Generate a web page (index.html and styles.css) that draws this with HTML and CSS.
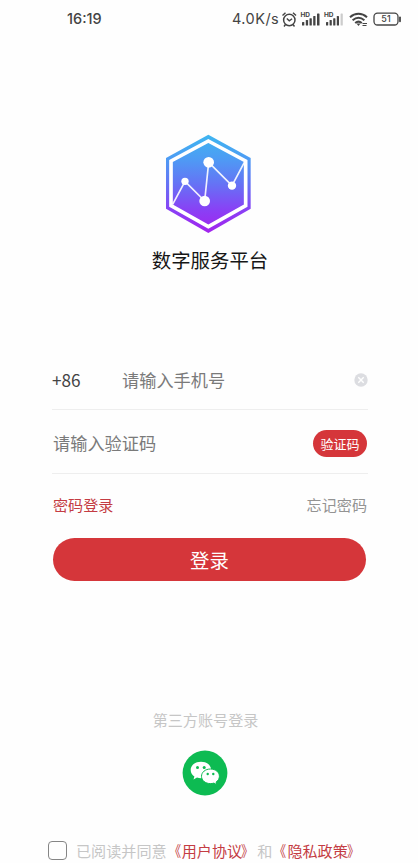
FILE: index.html
```html
<!DOCTYPE html>
<html lang="zh-CN">
<head>
<meta charset="utf-8">
<title>数字服务平台</title>
<link rel="stylesheet" href="styles.css">
</head>
<body>
<div class="screen">
  <header class="status">
    <span class="time">16:19</span>
    <span class="speed">4.0K/s</span>
    <svg class="status-icons" width="124" height="20" viewBox="0 0 124 20" fill="none" stroke="#444">
      <circle cx="10.300" cy="11" r="5.700" stroke-width="1.500"/>
      <path d="M3.500 6.500l3-2.800M17 6.500l-3-2.800M6.500 15.500l-1.500 2M14 15.500l1.500 2" stroke-width="1.400"/>
      <path d="M7.800 9.500l2.500 2.300 2.800-2" stroke-width="1.400"/>
      <g stroke="none" fill="#444">
        <text class="hd" x="21.500" y="7.800">HD</text>
        <rect x="23" y="13" width="2.300" height="3.500" rx=".6"/>
        <rect x="26.800" y="11" width="2.300" height="5.500" rx=".6"/>
        <rect x="30.500" y="9.200" width="2.300" height="7.300" rx=".6"/>
        <rect x="34.200" y="7" width="2.300" height="9.500" rx=".6"/>
        <rect x="38" y="4.500" width="2.500" height="12" rx=".6"/>
      </g>
      <g stroke="none" fill="#444">
        <text class="hd" x="45" y="7.800">HD</text>
        <rect x="47" y="13" width="2.200" height="3.500" rx=".6"/>
        <rect x="50.600" y="11" width="2.200" height="5.500" rx=".6"/>
        <rect x="54.200" y="9.200" width="2.200" height="7.300" rx=".6"/>
        <rect x="57.800" y="7" width="2.200" height="9.500" rx=".6"/>
        <rect x="61.600" y="4.500" width="2.200" height="12" rx=".6" fill="#ccc"/>
      </g>
      <path d="M71 8.200c5-4.500 12-4.500 17 0M73.600 11.200c3.600-3 8.200-3 11.800 0M76.200 14c2-1.700 4.600-1.700 6.600 0" stroke-width="2"/>
      <path d="M77.500 14.500h4l-2 2.500z" fill="#444" stroke="none"/>
      <path d="M83.500 14.500h4.500M83.500 16.500h4" stroke-width="1"/>
      <rect x="95" y="4.200" width="24" height="11.800" rx="3.500" stroke-width="1.300"/>
      <path d="M121 8.300v4" stroke-width="1.800" stroke-linecap="round"/>
      <text class="level" x="107" y="13.400" text-anchor="middle">51</text>
    </svg>
  </header>

  <section class="brand">
    <svg width="86" height="100" viewBox="30 27 258 300">
      <defs>
        <linearGradient id="sky" gradientUnits="userSpaceOnUse" x1="0" y1="29" x2="0" y2="324">
          <stop offset="0" stop-color="#3eb6f0"/>
          <stop offset=".25" stop-color="#4e9bf4"/>
          <stop offset=".5" stop-color="#6573f5"/>
          <stop offset=".78" stop-color="#8b3ef5"/>
          <stop offset="1" stop-color="#a323ed"/>
        </linearGradient>
      </defs>
      <path d="M160 29l127 70v152l-127 73-127-73V99z" fill="url(#sky)"/>
      <path d="M160 48l112 60v134l-112 63-112-63V108z" fill="none" stroke="#fff" stroke-width="11"/>
      <path d="M53 238l37-69 59 59 12-116 70 70 37-70" fill="none" stroke="#fff" stroke-opacity=".9" stroke-width="5"/>
      <g fill="#fff">
        <circle cx="90" cy="169" r="11"/><circle cx="149" cy="228" r="16"/>
        <circle cx="161" cy="112" r="16"/><circle cx="231" cy="182" r="12.500"/>
      </g>
    </svg>
    <h1>数字服务平台</h1>
  </section>

  <main class="form">
    <div class="field phone">
      <span class="code">+86</span>
      <span class="hint">请输入手机号</span>
      <svg class="clear" width="14" height="14" viewBox="0 0 14 14"><circle cx="7" cy="7" r="6.700" fill="#dcdde1"/><path d="M4.300 4.300l5.400 5.400M9.700 4.300L4.300 9.700" stroke="#fff" stroke-width="1.400"/></svg>
    </div>
    <div class="field verify">
      <span class="hint">请输入验证码</span>
      <button class="send">验证码</button>
    </div>
    <div class="links"><a class="red">密码登录</a><a class="forgot">忘记密码</a></div>
    <button class="login">登录</button>
  </main>

  <section class="third">
    <p>第三方账号登录</p>
    <svg width="46" height="46" viewBox="0 0 46 46">
      <circle cx="23" cy="23" r="22.400" fill="#0dbb52"/>
      <path d="M19 11.800c-6 0-10.300 3.600-10.300 8.200 0 2.700 1.400 4.900 3.700 6.400l-.9 3 3.500-1.800c1.300.4 2.600.6 4 .6 6 0 10.200-3.600 10.200-8.200S25 11.800 19 11.800z" fill="#fff"/>
      <path d="M28.500 19c-5.200 0-9 3.200-9 7.300s3.800 7.300 9 7.300c1.200 0 2.400-.2 3.400-.5l3 1.600-.8-2.700c2-1.300 3.300-3.300 3.300-5.700 0-4.100-3.800-7.300-8.900-7.300z" fill="#fff" stroke="#0dbb52" stroke-width="1"/>
      <g fill="#0dbb52"><circle cx="15.500" cy="17.500" r="1.500"/><circle cx="22.200" cy="17.500" r="1.500"/><circle cx="25.700" cy="24" r="1.200"/><circle cx="31.300" cy="24" r="1.200"/></g>
    </svg>
  </section>

  <footer class="agree">
    <span class="box"></span>
    <span>已阅读并同意<a class="red"><span class="open">《</span>用户协议<span class="close">》</span></a>和<a class="red"><span class="open">《</span>隐私政策<span class="close">》</span></a></span>
  </footer>
</div>
</body>
</html>
```
FILE: styles.css
```css
* { box-sizing: border-box; }
body {
  margin: 0;
  background: #fefefe;
  font-family: "Noto Sans CJK SC", sans-serif;
}
.screen {
  display: flex;
  flex-direction: column;
  width: 418px;
  height: 863px;
  overflow: hidden;
}
.status {
  display: flex;
  align-items: center;
  flex: none;
  height: 38px;
  padding-left: 67px;
  color: #444;
  font-family: Inter, sans-serif;
  font-size: 14.5px;
  line-height: 20px;
}
.time { width: 165px; font-weight: 500; font-size: 14.5px; }
.speed { width: 47px; letter-spacing: .45px; white-space: nowrap; }
.status-icons { flex: none; }
.hd { font: 700 6.5px Inter, sans-serif; }
.level { font: 500 9px Inter, sans-serif; fill: #444; stroke: none; }
.brand {
  display: flex;
  flex-direction: column;
  align-items: center;
  flex: none;
  height: 314px;
  padding: 96px 2px 0 0;
}
.brand svg { flex: none; }
h1 {
  margin: 11px 0 0 4px;
  font-size: 19.4px;
  font-weight: 400;
  line-height: 30px;
  color: #161616;
}
.form { flex: none; width: 316px; margin-left: 52px; height: 350px; }
.field {
  display: flex;
  align-items: center;
  border-bottom: 1.5px solid #eee;
  font-size: 17.2px;
  line-height: 26px;
  color: #7a7a7a;
}
.phone { height: 58px; padding-bottom: 2px; }
.verify { height: 64px; padding: 3px 1px 0 1px; }
.verify .hint { margin-top: -1px; }
.code { width: 70px; color: #444; }
.clear { margin-left: auto; }
button {
  border: 0;
  padding: 0;
  background: #d5363a;
  color: #fff;
  font-family: inherit;
}
.send {
  width: 54px;
  height: 27px;
  margin-left: auto;
  border-radius: 14px;
  font-size: 13px;
  line-height: 27px;
}
.links {
  display: flex;
  justify-content: space-between;
  height: 64px;
  padding: 0 1px;
  font-size: 15.1px;
  line-height: 60px;
}
.red { color: #c43c43; }
.forgot { color: #939393; }
.login {
  display: block;
  width: 313px;
  height: 43px;
  margin-left: 1px;
  border-radius: 22px;
  font-size: 19.4px;
  line-height: 43px;
}
.third {
  display: flex;
  flex-direction: column;
  align-items: center;
  flex: none;
  padding: 5px 7px 0 0;
  height: 130px;
}
.third p {
  margin: 0 0 19px;
  font-size: 15.1px;
  line-height: 24px;
  color: #c6c6c6;
}
.third svg { margin-right: 1px; }
.agree {
  display: flex;
  align-items: center;
  flex: none;
  height: 30px;
  margin-top: 3px;
  padding-left: 48px;
  font-size: 15.1px;
  line-height: 24px;
  color: #c6c6c6;
  white-space: nowrap;
}
.box {
  width: 19px;
  height: 19px;
  margin-right: 9px;
  border: 1.5px solid #858585;
  border-radius: 4px;
}
.open, .close { display: inline-block; transform: translateX(-1px) scaleX(.82); }
.open { transform-origin: right; }
.close { transform-origin: left; }
```
